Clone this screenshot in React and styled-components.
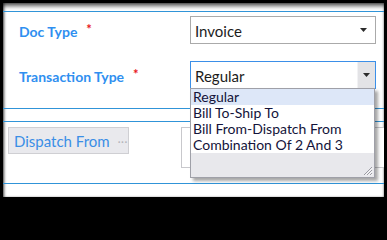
import React from "react";
import styled, { createGlobalStyle } from "styled-components";

const Global = createGlobalStyle`
  html, body { margin: 0; padding: 0; background: #000; width: 387px; height: 201px; overflow: hidden; }
  body { font-family: Lato, "Open Sans", sans-serif; padding: 3px 0 0 3px; box-sizing: border-box; }
  #root { width: 381px; height: 194px; }
`;

const Window = styled.div`
  width: 381px;
  height: 194px;
  padding-top: 8px;
  box-sizing: border-box;
  background: #fff;
  overflow: hidden;
  box-shadow: inset 0 5px 4px -2px rgba(0, 0, 0, 0.65), inset 2px 0 3px -1px rgba(0, 0, 0, 0.7),
    inset -1px 0 2px -1px rgba(0, 0, 0, 0.5);
`;

const Section = styled.div`
  border-top: ${(p) => (p.$top ? "1px solid #3094d8" : "none")};
  border-bottom: 1px solid #3094d8;
  height: ${(p) => p.$h}px;
  padding: ${(p) => p.$pad || "0"};
  box-sizing: content-box;
  display: flex;
  flex-direction: column;
  gap: ${(p) => p.$gap || 0}px;
`;

const FieldRow = styled.div`
  display: grid;
  grid-template-columns: 171px 186px;
  align-items: center;
  padding-left: 16px;
  height: 28px;
`;

const Label = styled.div`
  font-weight: 700;
  font-size: 14px;
  color: #2f8ff0;
  display: flex;
  align-items: flex-start;
  padding-top: 3px;
  white-space: nowrap;
`;

const Star = styled.span`
  color: #e8141a;
  font-weight: 700;
  font-size: 13px;
  margin-left: 9px;
  line-height: 1;
  margin-top: 0px;
`;

const SelectBox = styled.div`
  position: relative;
  height: 28px;
  box-sizing: border-box;
  border: 1px solid ${(p) => (p.$focus ? "#3b8fe8" : "#aaaaaa")};
  background: #fff;
  display: flex;
  align-items: center;
  justify-content: space-between;
  font-size: 15px;
  color: #1c1c1c;
`;

const SelectText = styled.span`
  padding-left: 4px;
  padding-top: 1px;
`;

const ArrowBtn = styled.div`
  width: 17px;
  align-self: stretch;
  display: flex;
  align-items: center;
  justify-content: center;
  background: ${(p) => (p.$shaded ? "#e3e3e6" : "transparent")};
  border-left: 1px solid ${(p) => (p.$shaded ? "#f2f2f4" : "transparent")};
  margin-right: ${(p) => (p.$shaded ? "0" : "3px")};
`;

const Triangle = () => (
  <svg width="7" height="4" viewBox="0 0 7 4">
    <path d="M0 0h7L3.5 4z" fill="#2b2b2b" />
  </svg>
);

const Menu = styled.div`
  position: absolute;
  top: 100%;
  left: -1px;
  width: 185px;
  box-sizing: border-box;
  border: 1px solid #9fa0a8;
  background: #fff;
  box-shadow: 3px 3px 3px rgba(0, 0, 0, 0.35);
  z-index: 5;
`;

const Option = styled.div`
  height: 16px;
  line-height: 16px;
  font-size: 14px;
  color: #13133a;
  padding-left: 2px;
  white-space: nowrap;
  overflow: hidden;
  background: ${(p) => (p.$active ? "#dde7f8" : "#fff")};
`;

const MenuFooter = styled.div`
  height: 23px;
  background: #e8e8ec;
  display: flex;
  justify-content: flex-end;
  align-items: flex-end;
  padding: 0 1px 1px 0;
`;

const Grip = () => (
  <svg width="11" height="11" viewBox="0 0 11 11">
    <path d="M10 2L2 10M10 5L5 10M10 8L8 10" stroke="#9a9aa2" strokeWidth="1" />
    <path d="M10.5 3L3 10.5M10.5 6L6 10.5M10.5 9L9 10.5" stroke="#fff" strokeWidth="0.8" />
  </svg>
);

const LowerRow = styled.div`
  display: flex;
  align-items: flex-start;
  padding-left: 5px;
  gap: 52px;
`;

const LookupBox = styled.div`
  width: 126px;
  height: 27px;
  box-sizing: border-box;
  border: 1px solid #cfcfd3;
  background: #e9e9ed;
  display: flex;
  align-items: center;
  padding-left: 5px;
  font-size: 15px;
  color: #3a8ee6;
  gap: 8px;
  white-space: nowrap;
`;

const Dots = styled.span`
  color: #b4b4ba;
  font-size: 11px;
  letter-spacing: 0.5px;
  padding-top: 1px;
`;

const AreaBox = styled.div`
  flex: 0 0 220px;
  height: 41px;
  box-sizing: border-box;
  border: 1px solid #c8c8cc;
  background: #fff;
`;

const options = ["Regular", "Bill To-Ship To", "Bill From-Dispatch From", "Combination Of 2 And 3"];

export default function App() {
  return (
    <>
      <Global />
      <Window>
        <Section $top $h={92} $pad="4px 0 0 0" $gap={17}>
          <FieldRow>
            <Label>
              Doc Type<Star>*</Star>
            </Label>
            <SelectBox>
              <SelectText>Invoice</SelectText>
              <ArrowBtn>
                <Triangle />
              </ArrowBtn>
            </SelectBox>
          </FieldRow>
          <FieldRow>
            <Label>
              Transaction Type<Star>*</Star>
            </Label>
            <SelectBox $focus>
              <SelectText>Regular</SelectText>
              <ArrowBtn $shaded>
                <Triangle />
              </ArrowBtn>
              <Menu>
                {options.map((o, i) => (
                  <Option key={o} $active={i === 0}>
                    {o}
                  </Option>
                ))}
                <MenuFooter>
                  <Grip />
                </MenuFooter>
              </Menu>
            </SelectBox>
          </FieldRow>
        </Section>
        <Section $h={12} />
        <Section $h={56} $pad="5px 0 0 0">
          <LowerRow>
            <LookupBox>
              Dispatch From<Dots>···</Dots>
            </LookupBox>
            <AreaBox />
          </LowerRow>
        </Section>
      </Window>
    </>
  );
}
